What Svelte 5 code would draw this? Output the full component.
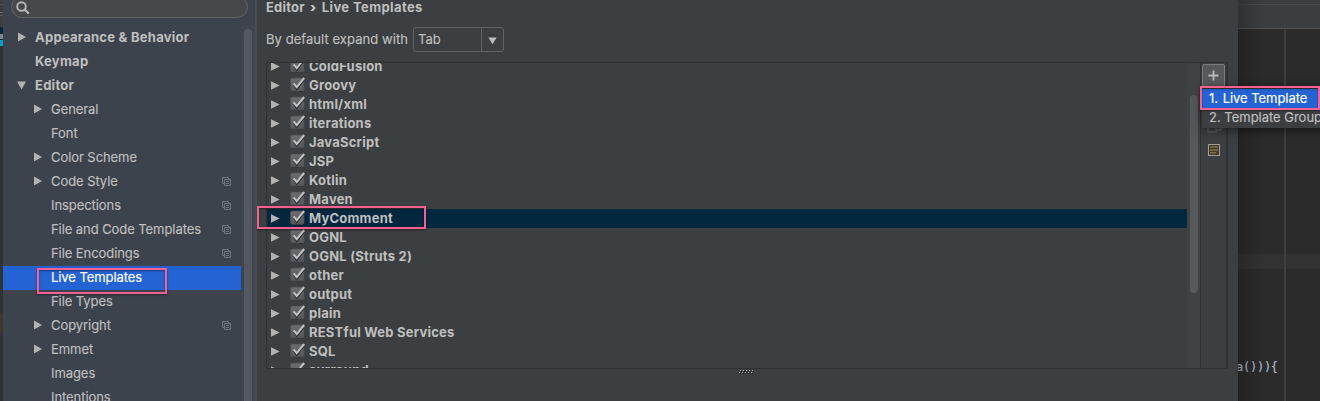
<script>
  const nav = [
    { t: 'Appearance & Behavior', top: true, a: 'r' },
    { t: 'Keymap', top: true },
    { t: 'Editor', top: true, a: 'd' },
    { t: 'General', a: 'r' },
    { t: 'Font' },
    { t: 'Color Scheme', a: 'r' },
    { t: 'Code Style', a: 'r', copy: true },
    { t: 'Inspections', copy: true },
    { t: 'File and Code Templates', copy: true },
    { t: 'File Encodings', copy: true },
    { t: 'Live Templates', sel: true },
    { t: 'File Types' },
    { t: 'Copyright', a: 'r', copy: true },
    { t: 'Emmet', a: 'r' },
    { t: 'Images' },
    { t: 'Intentions' }
  ];
  const groups = ['ColdFusion', 'Groovy', 'html/xml', 'iterations', 'JavaScript', 'JSP', 'Kotlin', 'Maven', 'MyComment', 'OGNL', 'OGNL (Struts 2)', 'other', 'output', 'plain', 'RESTful Web Services', 'SQL', 'surround'];
</script>

<div class="screen">
  <div class="behind-left"><i class="sep"></i><i class="dark"></i><i class="cyan"></i><i class="olive"></i></div>

  <aside>
    <div class="search">
      <svg width="14" height="14" viewBox="0 0 14 14"><circle cx="5.5" cy="5.5" r="4.3" fill="none" stroke="#b4b6b8" stroke-width="1.9" /><path d="M8.7 8.7 12.2 12" stroke="#b4b6b8" stroke-width="2.3" stroke-linecap="round" /></svg>
    </div>
    <div class="navbody">
      <div class="nav">
        {#each nav as n}
          <div class="nrow" class:top={n.top} class:sel={n.sel}>
            <span class="arr">
              {#if n.a === 'r'}<svg width="9" height="10"><path d="M1 .5 9 5 1 9.5z" fill="#b3b3b3" /></svg>{/if}
              {#if n.a === 'd'}<svg width="9" height="10"><path d="M0 1.5H9L4.5 9.5z" fill="#b3b3b3" /></svg>{/if}
            </span>
            <span class="lbl">{n.t}</span>
            {#if n.copy}
              <svg class="copy" width="10" height="10" viewBox="0 0 10 10" fill="none" stroke="#6d7880"><path d="M2 6.5H.5v-6h6V2M2.5 2.5h6v6h-6zM4 4.5h3M4 6.5h3" /></svg>
            {/if}
          </div>
        {/each}
      </div>
      <div class="ntrack"><i></i></div>
    </div>
  </aside>

  <main>
    <div class="crumb"><span>Editor</span><b>›</b><span class="leaf">Live Templates</span></div>
    <div class="expand">
      <span>By default expand with</span>
      <div class="combo"><span>Tab</span><i><svg width="9" height="8"><path d="M.3.5H8.7L4.5 7.2z" fill="#b9bbbd" /></svg></i></div>
    </div>
    <div class="box">
      <div class="list">
        {#each groups as g}
          <div class="grow" class:hit={g === 'MyComment'}>
            <svg class="garr" width="9" height="9"><path d="M0 .2 8.7 4.5 0 8.8z" fill="#b3b3b3" /></svg>
            <svg class="chk" width="16" height="17" viewBox="0 0 16 17">
              <defs><linearGradient id="cb" x2="0" y2="1"><stop stop-color="#6c6d6e" /><stop offset="1" stop-color="#555758" /></linearGradient></defs>
              <path d="M2 15.5h11" stroke="#2e3032" />
              <rect x=".5" y="2" width="13.5" height="13" rx="1.5" fill="url(#cb)" stroke="#4c4e50" stroke-width=".8" />
              <path d="M4 8.7 6.7 12.9 14 4" fill="none" stroke="#28292a" stroke-width="1.8" />
              <path d="M3.6 7.3 6.7 11.2 14.2 2" fill="none" stroke="#c0c2c3" stroke-width="2" />
            </svg>
            <span>{g}</span>
          </div>
        {/each}
      </div>
      <div class="gtrack"><i></i></div>
      <div class="tools">
        <div class="add"><svg width="11" height="11"><path d="M5.5.5v10M.5 5.5h10" stroke="#b9bbbd" stroke-width="1.8" /></svg></div>
        <svg class="dup" width="15" height="10" viewBox="0 0 15 10"><path d="M1 2v6h8V2M9 6h5V1" fill="none" stroke="#5b5e60" stroke-width="1.5" /></svg>
        <svg class="note" width="12" height="12" viewBox="0 0 12 12"><rect x=".5" y=".5" width="11" height="11" fill="#443c26" stroke="#a09e98" /><path d="M2 3h8M2 6h8M2 8.7h6" stroke="#7d7048" stroke-width="1.5" /></svg>
      </div>
    </div>
    <svg class="grip" width="16" height="5">
      {#each [0, 1, 2, 3, 4] as k}
        <rect x={1 + k * 3} y="0" width="1" height="1" fill="#a9abad" /><rect x={2 + k * 3} y="1" width="1" height="1" fill="#151617" />
        <rect x={k * 3} y="2" width="1" height="1" fill="#a9abad" /><rect x={1 + k * 3} y="3" width="1" height="1" fill="#151617" />
      {/each}
    </svg>
  </main>

  <section class="editor">
    <div class="ehead"></div>
    <div class="ebody"><div class="caret"></div><code>a())){'{'}</code></div>
    <i class="margin"></i>
    <i class="shade"></i>
  </section>

  <div class="menu"><div class="mi on">1. <span>Live Template</span></div><div class="mi">2. <span>Template Group...</span></div></div>
  <i class="mark m1"></i><i class="mark m2"></i><i class="mark m3"></i>
</div>

<style>
  .screen { position: relative; width: 1320px; height: 401px; overflow: hidden; display: flex; background: #3c3f41; color: #bfbfbf; font: 13px/24px Inter, sans-serif; white-space: nowrap; }
  svg { display: block; flex: none; }
  i { display: block; }
  .behind-left { width: 3px; background: #303234; flex: none; }
  .sep { height: 27px; background: linear-gradient(#3b3d3f 4px, #4b4d4f 4px 5px, #3b3d3f 5px 12px, #66686a 12px 13px, #3b3d3f 13px 15px, #5c5e60 15px 16px, #3b3d3f 16px); }
  .dark { height: 13px; background: linear-gradient(#0a2536 7px, #7b8790 7px 12px, #0a2536 12px); }
  .cyan { height: 6px; background: #0a9fc8; }
  .olive { margin-top: 267px; height: 19px; background: #3b392e; }

  aside { width: 252px; flex: none; background: #3d434d; border-right: 2px solid #4a4e55; box-sizing: content-box; display: flex; flex-direction: column; }
  .search { box-sizing: border-box; height: 22px; margin: -4px 7px 0 8px; width: 237px; border: 1px solid #616669; border-radius: 11px; background: #45494a; padding: 4px 0 0 4px; flex: none; }
  .navbody { display: flex; margin-top: 8px; height: 375px; flex: none; }
  .nav { width: 238px; }
  .nrow { height: 24px; display: flex; box-sizing: border-box; padding-left: 30px; align-items: center; letter-spacing: -.07px; -webkit-text-stroke: .15px; }
  .nrow.top { padding-left: 14px; font-weight: 700; letter-spacing: .26px; -webkit-text-stroke: 0; }
  .nrow .arr { width: 18px; height: 12px; }
  .nrow .lbl { line-height: 22px; margin-top: -2px; }
  .nrow.sel { background: #2363d4; color: #fff; }
  .copy { margin: 0 9px 0 auto; }
  .ntrack { width: 14px; background: #40444d; }
  .ntrack i { width: 8px; height: 400px; margin: 3px 0 0 3px; border-radius: 4px; background: #555860; }

  main { width: 981px; flex: none; }
  .crumb { display: flex; font-weight: 700; height: 17px; line-height: 15px; padding-left: 9px; letter-spacing: .2px; }
  .crumb b { width: 17px; text-align: center; }
  .crumb .leaf { letter-spacing: .4px; }
  .expand { display: flex; padding: 10px 0 0 9px; height: 25px; line-height: 24px; letter-spacing: .06px; -webkit-text-stroke: .15px; }
  .combo { box-sizing: border-box; margin-left: 5px; width: 91px; height: 25px; border: 1px solid #606365; border-radius: 3px; display: flex; line-height: 23px; }
  .combo span { width: 63px; padding-left: 4px; }
  .combo i { border-left: 1px solid #606365; padding: 9px 0 0 6px; }
  .box { margin: 10px 0 0 9px; width: 962px; height: 307px; box-sizing: border-box; border: 1px solid #2f3132; display: flex; overflow: hidden; }
  .list { width: 920px; height: 305px; overflow: hidden; }
  .grow { height: 19px; line-height: 19px; display: flex; align-items: center; font-weight: 700; letter-spacing: .22px; }
  .grow:first-child { margin-top: -6px; }
  .grow.hit { background: #02273e; }
  .garr { margin-left: 4px; }
  .chk { margin: -2px 3px 0 10px; }
  .gtrack { width: 14px; background: #3f4345; border-right: 1px solid #2f3132; box-sizing: border-box; }
  .gtrack i { width: 8px; height: 198px; margin: 32px 0 0 3px; border-radius: 4px; background: #565859; }
  .tools { width: 24px; padding-left: 1px; border-right: 1px solid #2f3132; }
  .add { box-sizing: border-box; width: 23px; height: 23px; margin-top: 1px; border: 1px solid #777b7d; border-radius: 2px; background: #575a5c; padding: 5px; }
  .dup { margin: 37px 0 0 5px; }
  .note { margin: 10px 0 0 6px; }
  .grip { margin: 1px 0 0 482px; }

  .editor { width: 82px; flex: none; position: relative; background: #2b2b2b; overflow: hidden; }
  .ehead { height: 28px; background: linear-gradient(#3b3e40 4px, #484b4d 4px 5px, #3b3e40 5px); border-bottom: 1px solid #505254; }
  .ebody { padding-top: 225px; }
  .caret { height: 15px; background: #323232; }
  code { display: block; margin: 88px 0 0 -2px; font: 12px/20px "DejaVu Sans Mono", monospace; color: #a9b7c6; letter-spacing: -.25px; -webkit-text-stroke: .2px; }
  .margin { position: absolute; left: 46px; top: 29px; width: 2px; height: 372px; background: #3d3e3f; }
  .shade { position: absolute; inset: 0 auto 0 0; width: 26px; background: linear-gradient(90deg, #0003, #0000); }

  .menu { position: absolute; left: 1202px; top: 87px; width: 130px; height: 41px; background: #3c3f41; box-sizing: border-box; padding-top: 2px; box-shadow: 0 2px 10px #0008; }
  .mi { height: 19px; line-height: 19px; padding-left: 7px; -webkit-text-stroke: .15px; }
  .mi span { letter-spacing: -.02px; }
  .mi.on span { margin-left: 1px; letter-spacing: -.05px; }
  .mi.on { background: #2363d4; color: #fff; }
  .mark { position: absolute; box-sizing: border-box; border: 2px solid #fa5f92; box-shadow: 0 1px 2px #0006, inset 0 1px 2px #0006; }
  .m1 { left: 37px; top: 268px; width: 130px; height: 26px; }
  .m2 { left: 257px; top: 206px; width: 169px; height: 23px; }
  .m3 { left: 1200px; top: 86px; width: 120px; height: 24px; }
</style>
